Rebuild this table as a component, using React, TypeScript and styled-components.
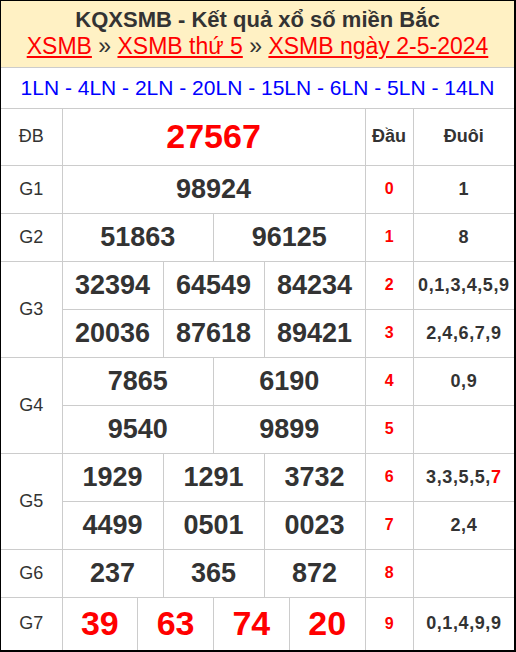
import React from "react";
import styled, { createGlobalStyle } from "styled-components";

const Global = createGlobalStyle`
  html, body { margin: 0; padding: 0; background: #fff; }
  body { font-family: "Liberation Sans", Arial, sans-serif; }
`;

const Box = styled.div`
  width: 516px;
  box-sizing: border-box;
  border-style: solid;
  border-color: #000;
  border-width: 1px 2px 2px 1px;
  background: #fff;
`;

const Header = styled.div`
  background: #fff1c4;
  border-bottom: 1px solid #ccc;
  text-align: center;
  padding: 5px 0 7px;
`;

const Title = styled.h1`
  margin: 0;
  font-size: 22px;
  line-height: 27px;
  font-weight: bold;
  color: #333;
`;

const Crumbs = styled.div`
  font-size: 23px;
  line-height: 27px;
  color: #333;
`;

const Crumb = styled.a`
  color: #f00;
  text-decoration: underline;
`;

const LotoBar = styled.div`
  height: 40px;
  line-height: 40px;
  text-align: center;
  color: #00f;
  font-size: 21px;
  border-bottom: 1px solid #ccc;
`;

const Table = styled.table`
  width: 513px;
  table-layout: fixed;
  border-collapse: collapse;
  border-style: hidden;
`;

const Row = styled.tr<{ $h: number }>`
  height: ${(p) => p.$h}px;
`;

const Cell = styled.td`
  border: 1px solid #ccc;
  padding: 0;
  text-align: center;
  vertical-align: middle;
`;

const Label = styled(Cell)`
  font-size: 18px;
  color: #333;
`;

const Num = styled(Cell)<{ $red?: boolean; $size?: number }>`
  font-size: ${(p) => p.$size ?? 27}px;
  font-weight: bold;
  color: ${(p) => (p.$red ? "#f00" : "#333")};
`;

const Head = styled.th`
  border: 1px solid #ccc;
  padding: 0;
  text-align: center;
  vertical-align: middle;
  font-size: 18px;
  font-weight: bold;
  color: #333;
`;

const Dau = styled(Cell)`
  font-size: 16px;
  font-weight: bold;
  color: #f00;
`;

const Duoi = styled(Cell)`
  font-size: 18px;
  font-weight: bold;
  color: #333;
  letter-spacing: 0.6px;
  white-space: nowrap;
`;

const Hot = styled.span`
  color: #f00;
`;

type Prize = { label: string; rows: string[][]; size?: number; red?: boolean; h?: number };

const prizes: Prize[] = [
  { label: "G1", rows: [["98924"]] },
  { label: "G2", rows: [["51863", "96125"]] },
  { label: "G3", rows: [["32394", "64549", "84234"], ["20036", "87618", "89421"]] },
  { label: "G4", rows: [["7865", "6190"], ["9540", "9899"]] },
  { label: "G5", rows: [["1929", "1291", "3732"], ["4499", "0501", "0023"]] },
  { label: "G6", rows: [["237", "365", "872"]] },
  { label: "G7", rows: [["39", "63", "74", "20"]], size: 34, red: true, h: 53 },
];

const loto: React.ReactNode[] = [
  "1",
  "8",
  "0,1,3,4,5,9",
  "2,4,6,7,9",
  "0,9",
  "",
  <>3,3,5,5,<Hot>7</Hot></>,
  "2,4",
  "",
  "0,1,4,9,9",
];

export default function App() {
  let idx = 0;
  const body: React.ReactNode[] = [];
  prizes.forEach((p) => {
    p.rows.forEach((nums, ri) => {
      const i = idx++;
      body.push(
        <Row key={`${p.label}-${ri}`} $h={p.h ?? 48}>
          {ri === 0 && <Label rowSpan={p.rows.length}>{p.label}</Label>}
          {nums.map((n, k) => (
            <Num key={k} colSpan={12 / nums.length} $red={p.red} $size={p.size}>
              {n}
            </Num>
          ))}
          <Dau>{i}</Dau>
          <Duoi>{loto[i]}</Duoi>
        </Row>
      );
    });
  });

  return (
    <>
      <Global />
      <Box>
        <Header>
          <Title>KQXSMB - Kết quả xổ số miền Bắc</Title>
          <Crumbs>
            <Crumb href="#">XSMB</Crumb> » <Crumb href="#">XSMB thứ 5</Crumb> »{" "}
            <Crumb href="#">XSMB ngày 2-5-2024</Crumb>
          </Crumbs>
        </Header>
        <LotoBar>1LN - 4LN - 2LN - 20LN - 15LN - 6LN - 5LN - 14LN</LotoBar>
        <Table>
          <colgroup>
            <col style={{ width: 61 }} />
            {Array.from({ length: 12 }).map((_, i) => (
              <col key={i} style={{ width: 25.25 }} />
            ))}
            <col style={{ width: 48 }} />
            <col style={{ width: 101 }} />
          </colgroup>
          <tbody>
            <Row $h={56}>
              <Label>ĐB</Label>
              <Num colSpan={12} $red $size={34}>
                27567
              </Num>
              <Head>Đầu</Head>
              <Head>Đuôi</Head>
            </Row>
            {body}
          </tbody>
        </Table>
      </Box>
    </>
  );
}
